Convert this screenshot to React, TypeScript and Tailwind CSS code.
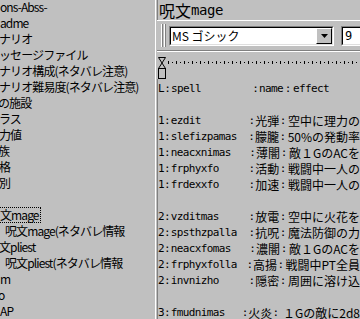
import React from "react";

const leftItems: { t: string; x: number; focus?: boolean }[] = [
  { t: "ons-Abss-", x: 0 },
  { t: "adme", x: 0 },
  { t: "ナリオ", x: -1 },
  { t: "ッセージファイル", x: -1 },
  { t: "ナリオ構成(ネタバレ注意)", x: -1 },
  { t: "ナリオ難易度(ネタバレ注意)", x: -1 },
  { t: "の施設", x: -2 },
  { t: "ラス", x: -1 },
  { t: "力値", x: -1 },
  { t: "族", x: -2 },
  { t: "格", x: -1 },
  { t: "別", x: -1 },
  { t: "", x: 0 },
  { t: "文mage", x: -1, focus: true },
  { t: "呪文mage(ネタバレ情報", x: 5 },
  { t: "文pliest", x: -1 },
  { t: "呪文pliest(ネタバレ情報", x: 5 },
  { t: "m", x: 0 },
  { t: "o", x: -2 },
  { t: "AP", x: 0 },
];

type Row = [string, string, string, string] | null;
const rows: Row[] = [
  ["L", "spell", "name", "effect"],
  null,
  ["1", "ezdit", "光弾", "空中に理力の"],
  ["1", "slefizpamas", "朦朧", "50%の発動率"],
  ["1", "neacxnimas", "薄闇", "敵１GのACを"],
  ["1", "frphyxfo", "活動", "戦闘中一人の"],
  ["1", "frdexxfo", "加速", "戦闘中一人の"],
  null,
  ["2", "vzditmas", "放電", "空中に火花を"],
  ["2", "spsthzpalla", "抗呪", "魔法防御の力"],
  ["2", "neacxfomas", "濃闇", "敵１GのACを"],
  ["2", "frphyxfolla", "高揚", "戦闘中PT全員"],
  ["2", "invnizho", "隠密", "周囲に溶け込"],
  null,
  ["3", "fmudnimas", "火炎", " １Gの敵に2d8"],
];

const mono = "font-['DejaVu_Sans_Mono',monospace] text-[11px] tracking-[-0.62px]";
const jp = "font-['Noto_Sans_CJK_JP',sans-serif] text-[12px]";

function Ruler() {
  const ticks: React.ReactNode[] = [];
  for (let x = 11; x < 205; x += 8) {
    ticks.push(<rect key={"t" + x} x={x} y={9} width={1} height={3} fill="#000" />);
    ticks.push(<rect key={"d" + x} x={x + 4} y={10} width={1} height={1} fill="#000" />);
  }
  return (
    <svg width="203" height="28" className="block">
      {ticks}
      <path d="M1.5 5.5 H8.5 L5 11 Z" fill="#c0c0c0" stroke="#000" strokeWidth="1" />
      <path d="M5 11 L1.5 16.5 H8.5 Z" fill="#c0c0c0" stroke="#000" strokeWidth="1" />
      <rect x="1.5" y="16.5" width="7" height="10" fill="#c0c0c0" stroke="#000" strokeWidth="1" />
    </svg>
  );
}

export default function App() {
  return (
    <div className="flex w-[360px] h-[319px] overflow-hidden bg-[#c0c0c0] text-black">
      {/* tree panel */}
      <div className="w-[155px] shrink-0 overflow-hidden">
        <div className={`${jp} tracking-[-0.9px] leading-[16px] mt-[-1px]`}>
          {leftItems.map((it, i) => (
            <div key={i} className="h-[16px] whitespace-nowrap" style={{ marginLeft: it.x }}>
              {it.focus ? (
                <span className="inline-block h-[16px] pr-[1px] border border-dotted border-black leading-[14px]">
                  {it.t}
                </span>
              ) : (
                it.t
              )}
            </div>
          ))}
        </div>
      </div>
      <div className="w-px bg-white shrink-0" />
      <div className="w-px bg-[#c0c0c0] shrink-0" />
      {/* right pane */}
      <div className="flex-1 min-w-0 flex flex-col">
        <div className="h-[20px] border-l border-[#808080] flex items-center pl-[1px] whitespace-nowrap">
          <span className="font-['Noto_Sans_CJK_JP',sans-serif] text-[16px] leading-[20px]">呪文</span>
          <span className="font-['DejaVu_Sans_Mono',monospace] text-[14px] tracking-[-0.4px] leading-[20px]">mage</span>
        </div>
        <div className="h-[31px] border-t border-white border-b border-b-[#808080] flex items-center">
          <div className="ml-[4px] flex h-[23px]">
            <div className="w-px bg-white" />
            <div className="w-px bg-[#808080]" />
            <div className="w-px" />
            <div className="w-px bg-white" />
            <div className="w-px bg-[#808080]" />
          </div>
          <div className="ml-[3px] w-[165px] h-[20px] border border-t-[#808080] border-l-[#808080] border-b-white border-r-white">
            <div className="h-full border border-t-black border-l-black border-b-[#dfdfdf] border-r-[#dfdfdf] bg-white flex items-center">
              <span className={`${jp} pl-[1px] leading-[16px] flex-1 whitespace-nowrap`}>MS ゴシック</span>
              <div className="w-[16px] h-[16px] bg-[#c0c0c0] border border-t-white border-l-white border-b-black border-r-black flex items-center justify-center">
                <svg width="7" height="4">
                  <path d="M0 0 H7 L3.5 4 Z" fill="#000" />
                </svg>
              </div>
            </div>
          </div>
          <div className="ml-[7px] flex-1 h-[20px] border border-r-0 border-t-[#808080] border-l-[#808080] border-b-white">
            <div className="h-full border border-r-0 border-t-black border-l-black border-b-[#dfdfdf] bg-white flex items-center">
              <span className="font-['DejaVu_Sans_Mono',monospace] text-[12px] pl-[2px] leading-[16px]">9</span>
            </div>
          </div>
        </div>
        <div className="border-t border-white h-[28px] overflow-hidden">
          <Ruler />
        </div>
        <div className="flex-1 border-l border-[#808080] pt-[2px] overflow-hidden">
          {rows.map((r, i) =>
            r === null ? (
              <div key={i} className="h-[16px]" />
            ) : (
              <div key={i} className="h-[16px] flex items-center whitespace-nowrap leading-[16px]">
                <span className={`${mono} w-[6px]`}>{r[0]}</span>
                <span className={`${mono} w-[7px] text-center tracking-normal`}>:</span>
                <span className={`${mono} w-[81px]`}>{r[1]}</span>
                <span className={`${mono} w-[7px] text-center tracking-normal`}>:</span>
                {i === 0 ? (
                  <span className={`${mono} w-[25px]`}>{r[2]}</span>
                ) : (
                  <span className={`${jp} w-[25px]`}>{r[2]}</span>
                )}
                <span className={`${mono} w-[8px] text-center tracking-normal`}>:</span>
                {i === 0 ? (
                  <span className={`${mono} pl-[1px]`}>{r[3]}</span>
                ) : (
                  <span className={`${jp} pl-[1px] whitespace-pre`}>{r[3]}</span>
                )}
              </div>
            )
          )}
        </div>
      </div>
    </div>
  );
}
